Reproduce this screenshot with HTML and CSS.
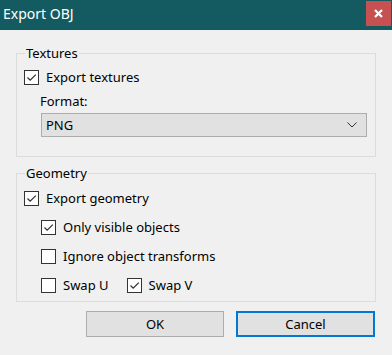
FILE: index.html
```html
<!DOCTYPE html>
<html>
  <head>
    <title>Export OBJ</title>
    <link rel="stylesheet" href="styles.css">
  </head>
  <body>
    <div class="dialog">
      <div class="titlebar">
        <span class="title">Export OBJ</span>
        <button type="button" class="close">
          <svg width="9" height="9" viewBox="0 0 9 9">
            <path d="M1 1 L8 8 M8 1 L1 8" stroke="#fff" stroke-width="2.2" />
          </svg>
        </button>
      </div>

      <fieldset class="group textures">
        <legend>Textures</legend>
        <label class="check">
          <span class="box checked"></span>
          Export textures
        </label>
        <div class="format-label">Format:</div>
        <div class="select">
          <span>PNG</span>
          <svg width="10" height="6" viewBox="0 0 10 6">
            <path d="M0.5 0.5 L5 5 L9.5 0.5" stroke="#333" stroke-width="1" fill="none" />
          </svg>
        </div>
      </fieldset>

      <fieldset class="group geometry">
        <legend>Geometry</legend>
        <label class="check">
          <span class="box checked"></span>
          Export geometry
        </label>
        <label class="check indent">
          <span class="box checked"></span>
          Only visible objects
        </label>
        <label class="check indent">
          <span class="box"></span>
          Ignore object transforms
        </label>
        <div class="swap indent">
          <label class="check">
            <span class="box"></span>
            Swap U
          </label>
          <label class="check">
            <span class="box checked"></span>
            Swap V
          </label>
        </div>
      </fieldset>

      <div class="buttons">
        <button type="button" class="btn">OK</button>
        <button type="button" class="btn default">Cancel</button>
      </div>
    </div>
  </body>
</html>
```

FILE: styles.css
```css
html,
body {
  margin: 0;
  background-color: #f0f0f0;
}

body {
  font-family: "Noto Sans", "Open Sans", sans-serif;
  font-size: 13px;
  color: #000;
}

.dialog {
  width: 392px;
  height: 355px;
  overflow: hidden;
}

.titlebar {
  display: flex;
  height: 30px;
  background-color: #135b61;
  color: #fff;
}

.title {
  padding-left: 3px;
  font-size: 14px;
  line-height: 28px;
}

.close {
  display: flex;
  align-items: center;
  justify-content: center;
  width: 25px;
  height: 25px;
  margin: 1px 1px 0 auto;
  padding: 0;
  border: none;
  background-color: #c75050;
}

.group {
  box-sizing: border-box;
  width: 360px;
  margin: 0 0 0 16px;
  border: 1px solid #dcdcdc;
  padding: 0 0 0 7px;
}

.group legend {
  margin-left: 1px;
  padding: 0 1px;
  line-height: 18px;
}

.textures {
  margin-top: 14px;
  padding-top: 6px;
  padding-bottom: 19px;
}

.geometry {
  display: flex;
  flex-direction: column;
  gap: 11px;
  margin-top: 7px;
  padding-top: 7px;
  padding-bottom: 7px;
}

.check {
  display: flex;
  align-items: center;
  gap: 7px;
  height: 18px;
}

.indent {
  margin-left: 17px;
}

.box {
  box-sizing: border-box;
  width: 15px;
  height: 15px;
  border: 1px solid #333;
  background-color: #fff;
}

.box.checked {
  background: #fff url("data:image/svg+xml;utf8,<svg xmlns='http://www.w3.org/2000/svg' width='13' height='13'><path d='M2.5 6.5 L5.2 9.2 L10.8 3.6' stroke='%23333' stroke-width='1.3' fill='none'/></svg>") no-repeat center;
}

.format-label {
  margin: 6px 0 0 16px;
  line-height: 18px;
}

.select {
  box-sizing: border-box;
  display: flex;
  align-items: center;
  justify-content: space-between;
  width: 326px;
  height: 24px;
  margin: 3px 0 0 17px;
  padding: 0 9px 0 4px;
  border: 1px solid #adadad;
  background-color: #e1e1e1;
}

.swap {
  display: flex;
  gap: 18px;
}

.buttons {
  display: flex;
  justify-content: flex-end;
  gap: 12px;
  margin-top: 9px;
  padding-right: 17px;
}

.btn {
  box-sizing: border-box;
  width: 138px;
  height: 26px;
  border: 1px solid #adadad;
  background-color: #e1e1e1;
  font-family: inherit;
  font-size: 13px;
  padding: 0;
}

.btn.default {
  width: 139px;
  border: 2px solid #0078d7;
}
```
